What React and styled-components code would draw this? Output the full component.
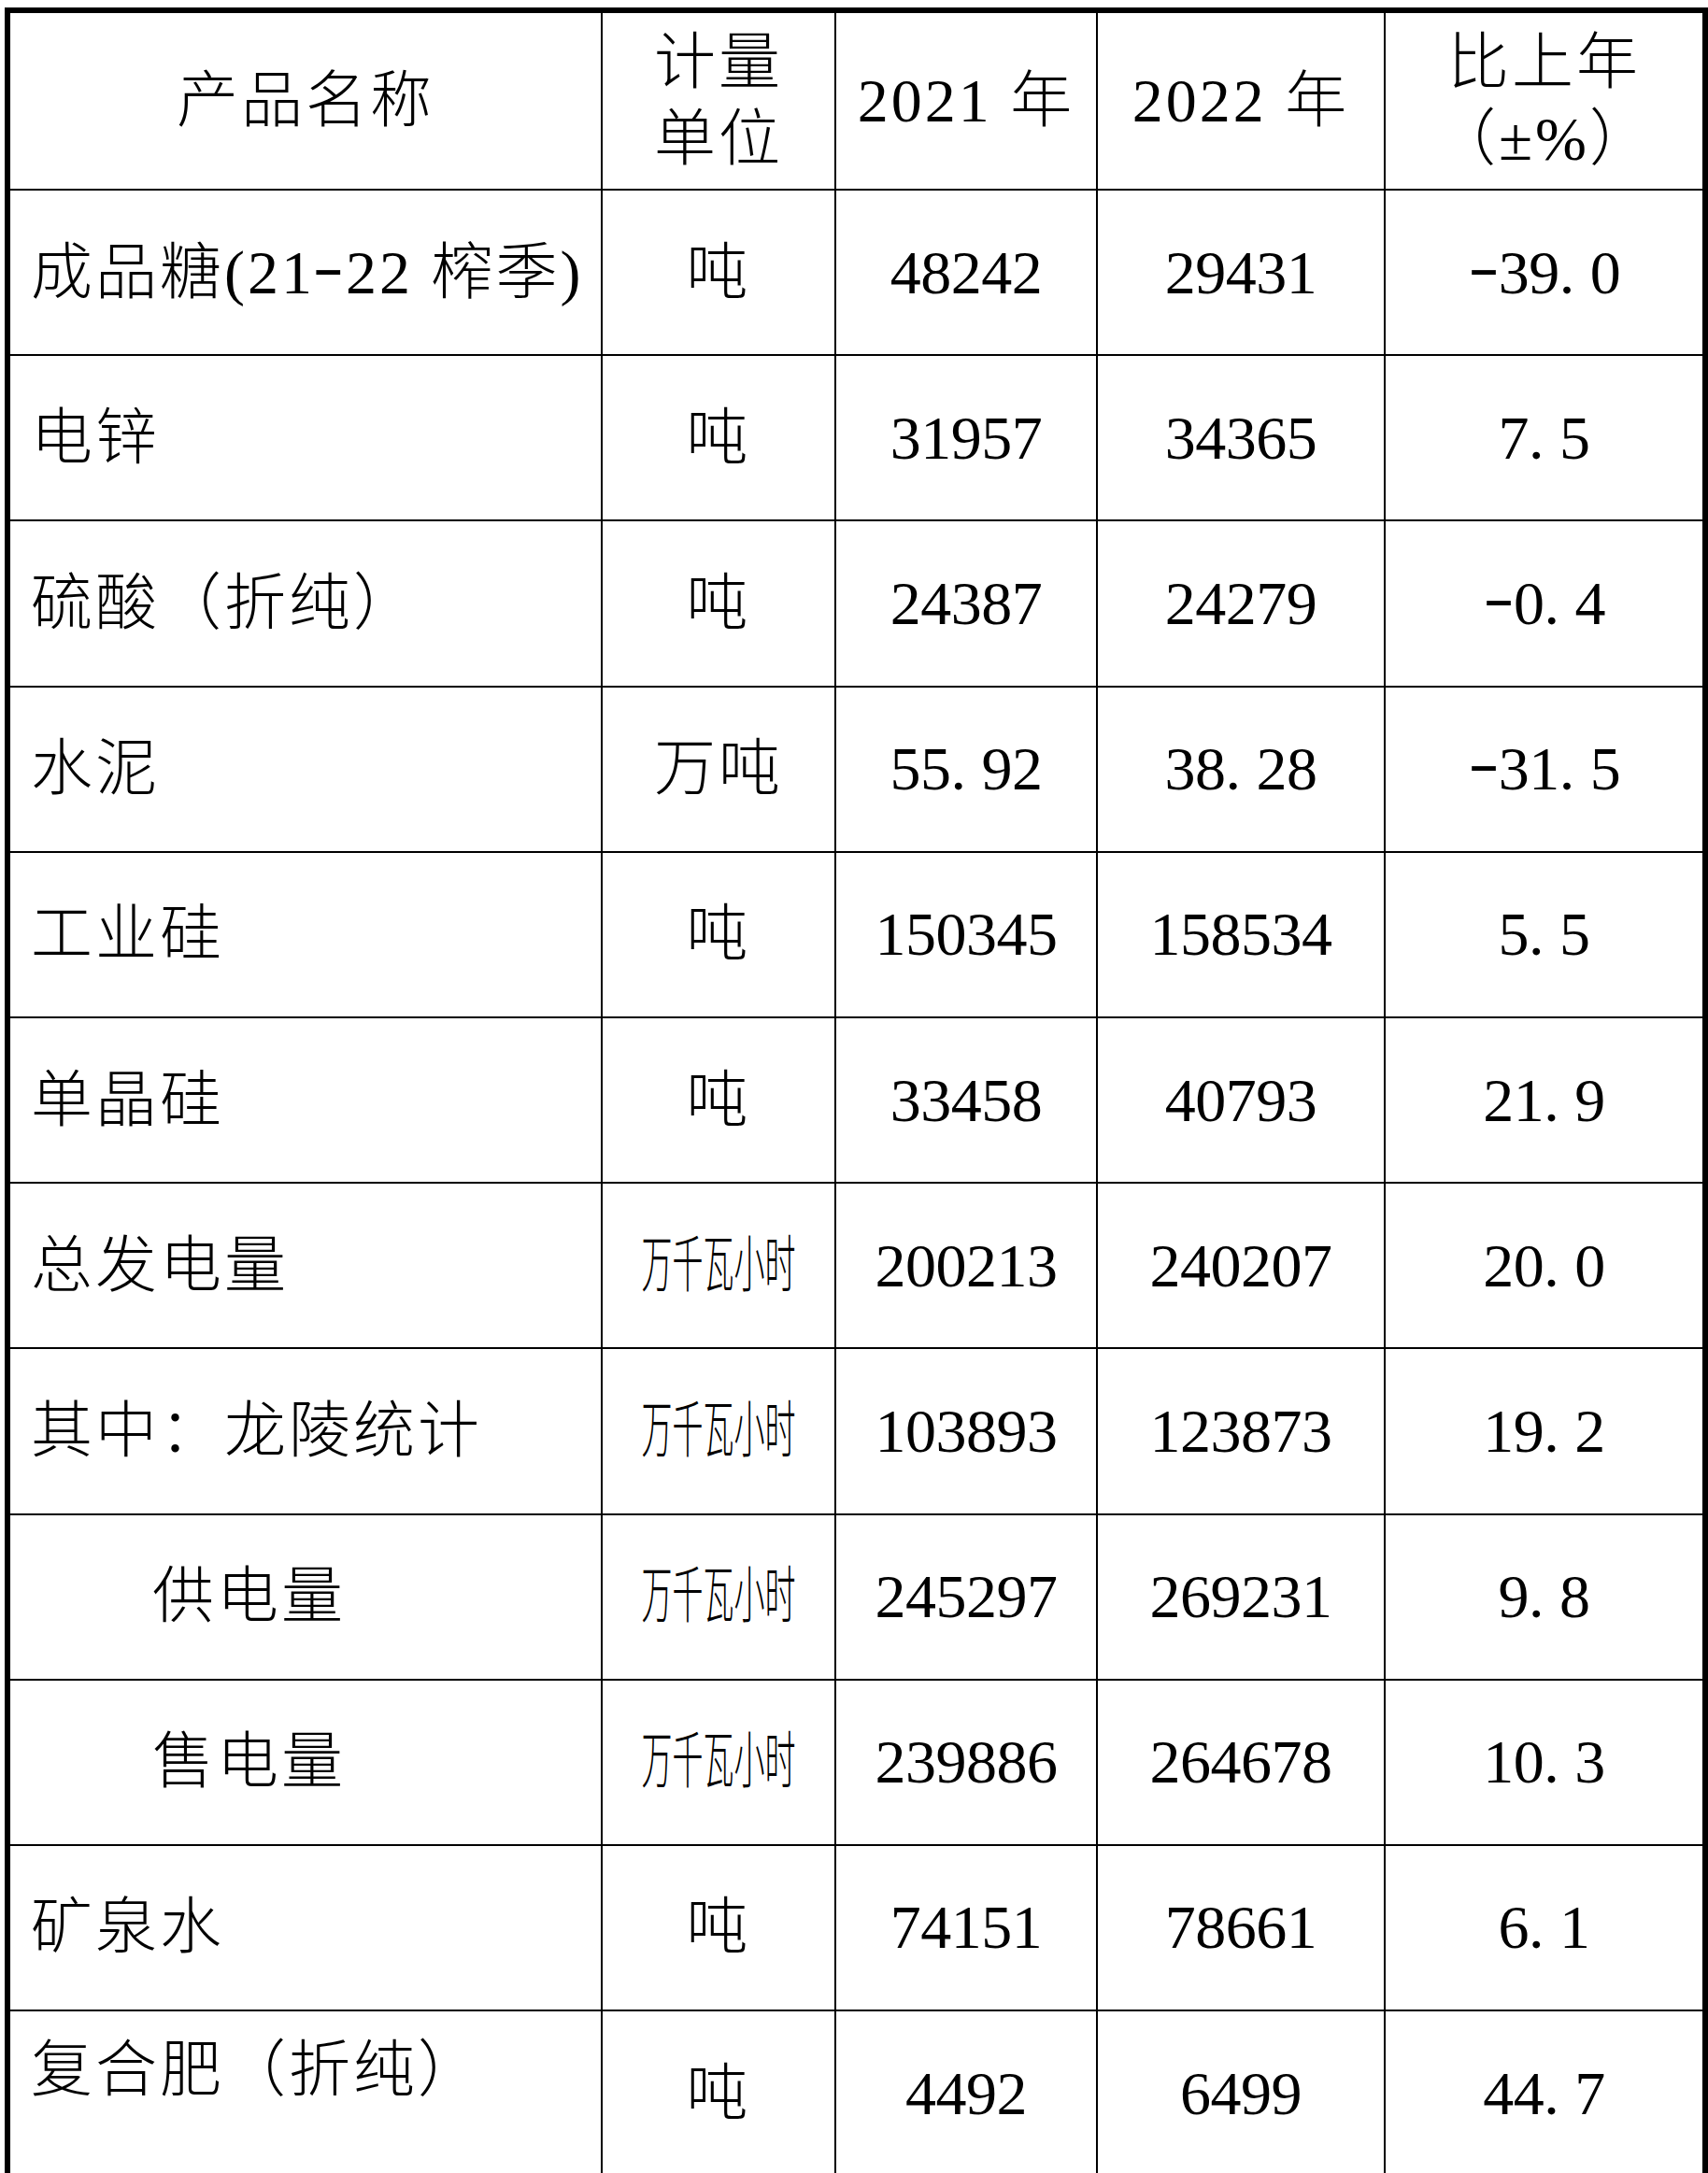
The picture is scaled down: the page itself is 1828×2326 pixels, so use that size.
import styled, { createGlobalStyle } from 'styled-components';

const GlobalStyle = createGlobalStyle`
  *, *::before, *::after {
    box-sizing: border-box;
  }
  body {
    margin: 0;
    background: #fff;
    color: #000;
    font-family: "Liberation Serif", "Noto Sans CJK SC", serif;
  }
`

const Sheet = styled.div`
  margin: 8px 0 0 5px;
  width: 1823px;
  border: 6px solid #000;
  display: grid;
  grid-template-columns: 634px 250px 280px 308px 339px;
  grid-template-rows: 190px;
  grid-auto-rows: 177.2px;
`

const Cell = styled.div`
  display: flex;
  align-items: center;
  justify-content: ${p => (p.$left ? 'flex-start' : 'center')};
  padding-left: ${p => (p.$left ? p.$indent || 22 : 0)}px;
  padding-bottom: ${p => (p.$lift ? 50 : 0)}px;
  border-right: ${p => (p.$end ? 0 : 2)}px solid #000;
  border-bottom: 2px solid #000;
  font-size: 66px;
  font-weight: 300;
  line-height: 1;
  letter-spacing: ${p => (p.$num ? '-0.5px' : '3px')};
  white-space: nowrap;
`

const HeadLines = styled.div`
  display: flex;
  flex-direction: column;
  align-items: center;
  line-height: 82px;
`

const Squeeze = styled.span`
  display: inline-block;
  transform: scaleX(0.5);
  letter-spacing: 0;
`

const Dot = styled.span`
  display: inline-block;
  width: 0.5em;
`

const Minus = styled.span`
  display: inline-block;
  width: 0.5em;
  text-align: center;
  transform: translateY(-0.1em) scaleX(1.5);
`

// digits in the source use half-width dots and a long minus
const Num = ({ value }) =>
  value.split('').map((ch, i) => {
    if (ch === '.') return <Dot key={i}>.</Dot>
    if (ch === '-') return <Minus key={i}>-</Minus>
    return ch
  })

const rows = [
  { name: '成品糖(21-22 榨季)', unit: '吨', a: '48242', b: '29431', c: '-39.0' },
  { name: '电锌', unit: '吨', a: '31957', b: '34365', c: '7.5' },
  { name: '硫酸（折纯）', unit: '吨', a: '24387', b: '24279', c: '-0.4' },
  { name: '水泥', unit: '万吨', a: '55.92', b: '38.28', c: '-31.5' },
  { name: '工业硅', unit: '吨', a: '150345', b: '158534', c: '5.5' },
  { name: '单晶硅', unit: '吨', a: '33458', b: '40793', c: '21.9' },
  { name: '总发电量', unit: '万千瓦小时', a: '200213', b: '240207', c: '20.0' },
  { name: '其中：龙陵统计', unit: '万千瓦小时', a: '103893', b: '123873', c: '19.2' },
  { name: '供电量', unit: '万千瓦小时', a: '245297', b: '269231', c: '9.8', indent: 152 },
  { name: '售电量', unit: '万千瓦小时', a: '239886', b: '264678', c: '10.3', indent: 152 },
  { name: '矿泉水', unit: '吨', a: '74151', b: '78661', c: '6.1' },
  { name: '复合肥（折纯）', unit: '吨', a: '4492', b: '6499', c: '44.7', lift: true },
]

const Unit = ({ text }) =>
  text.length > 2 ? <Squeeze>{text}</Squeeze> : text

export default function App() {
  return (
    <>
      <GlobalStyle />
      <Sheet>
        <Cell>产品名称</Cell>
        <Cell>
          <HeadLines>
            <span>计量</span>
            <span>单位</span>
          </HeadLines>
        </Cell>
        <Cell>2021 年</Cell>
        <Cell>2022 年</Cell>
        <Cell $end>
          <HeadLines>
            <span>比上年</span>
            <span>（±%）</span>
          </HeadLines>
        </Cell>
        {rows.map(r => (
          <>
            <Cell key={r.name} $left $indent={r.indent} $lift={r.lift}><Num value={r.name} /></Cell>
            <Cell><Unit text={r.unit} /></Cell>
            <Cell $num><Num value={r.a} /></Cell>
            <Cell $num><Num value={r.b} /></Cell>
            <Cell $num $end><Num value={r.c} /></Cell>
          </>
        ))}
      </Sheet>
    </>
  )
}
